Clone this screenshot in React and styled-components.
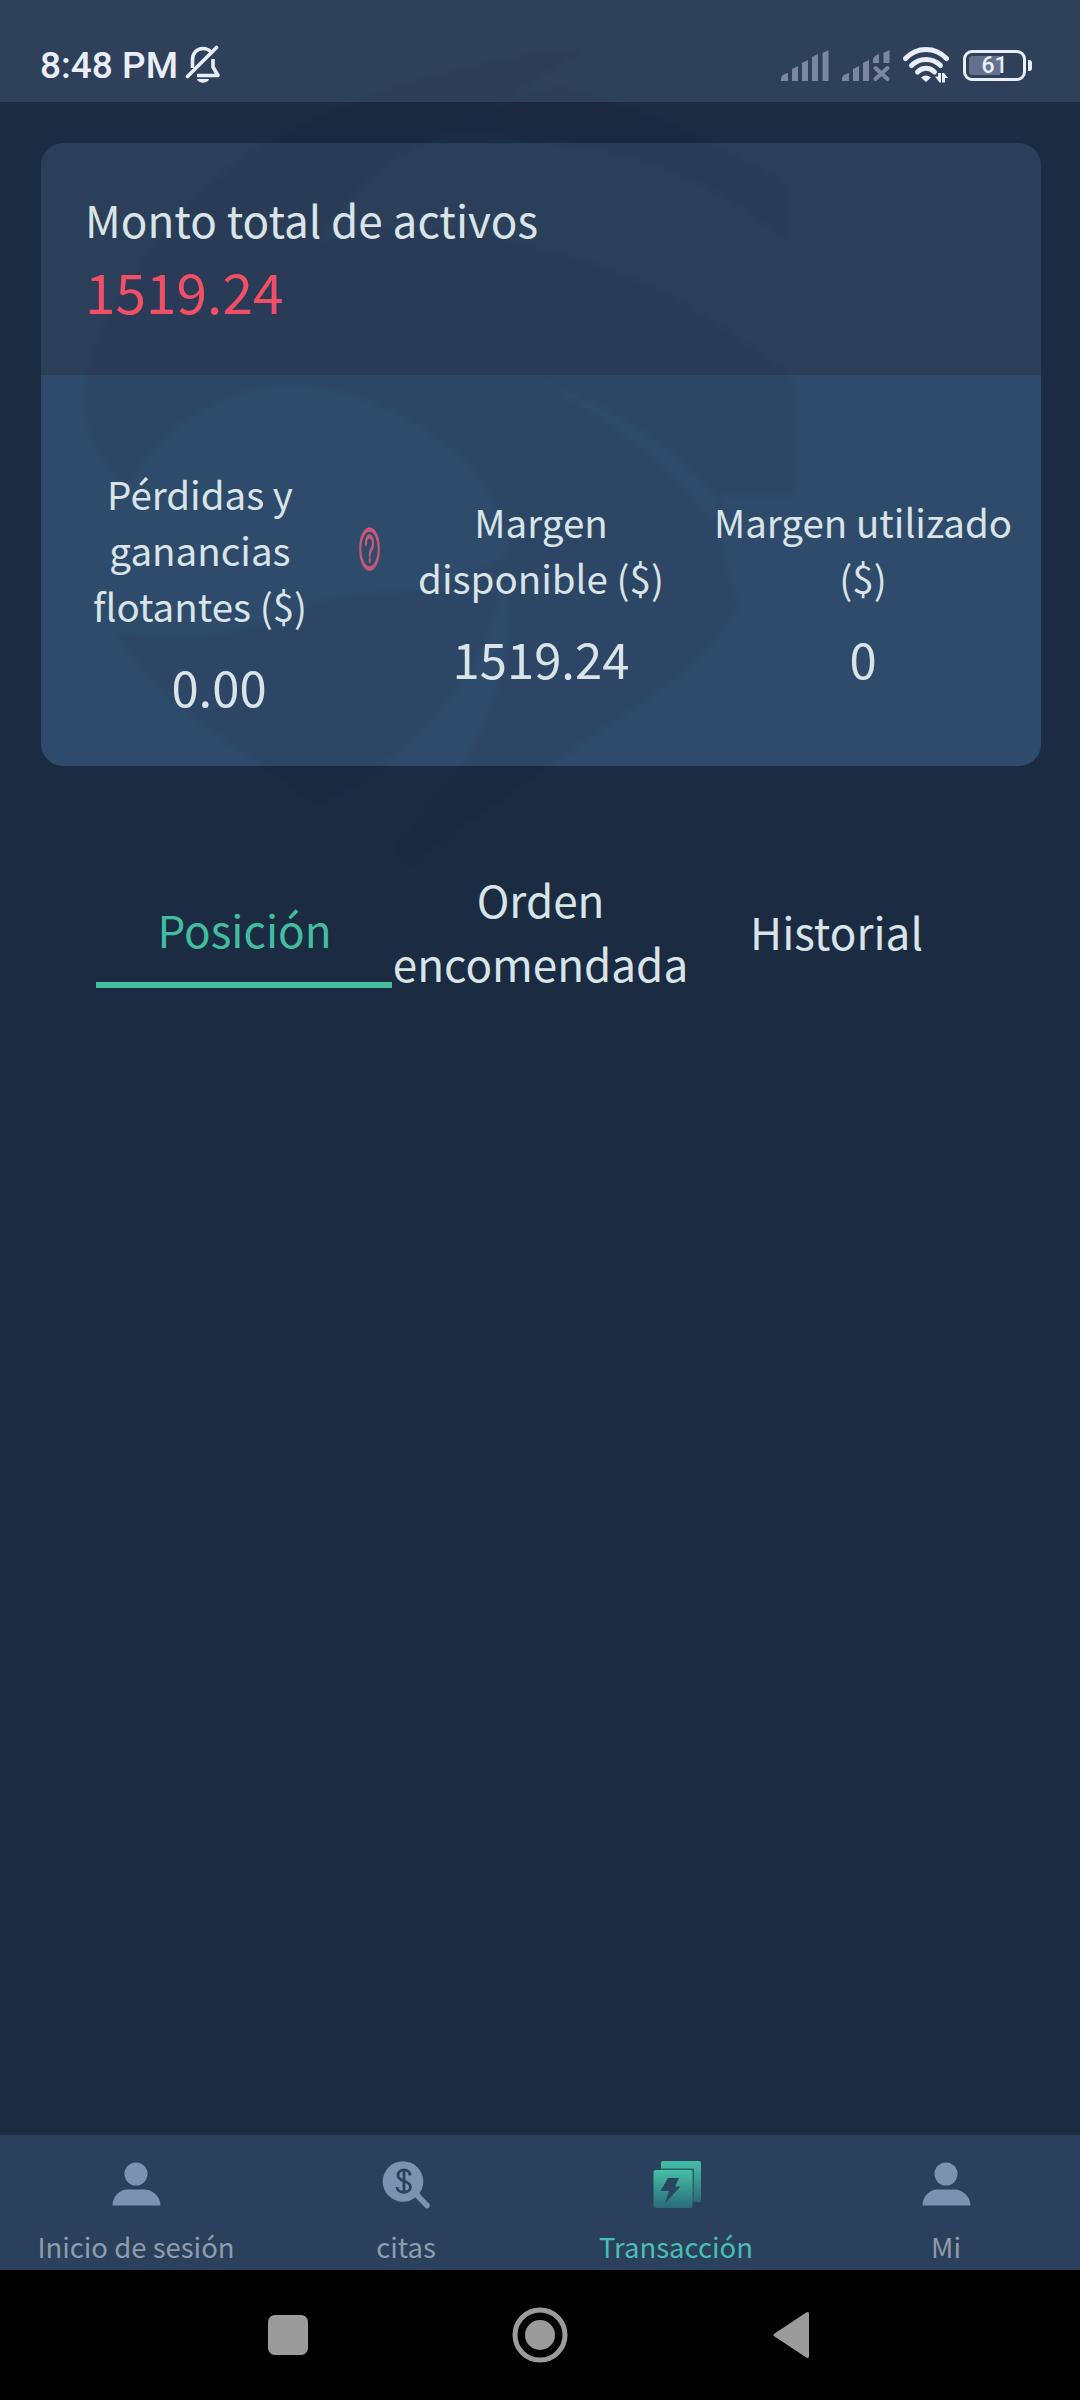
import React from "react";

// Styling
import styled, { createGlobalStyle } from "styled-components";

// Data
const stats = [
  { label: "Pérdidas y ganancias flotantes ($)", value: "0.00", help: true },
  { label: "Margen disponible ($)", value: "1519.24" },
  { label: "Margen utilizado ($)", value: "0" },
];

const tabs = ["Posición", "Orden encomendada", "Historial"];

const App = () => {
  return (
    <>
      <GlobalStyle />
      <StlScreen>
        <Watermark />
        <StatusBar />
        <StlMain>
          <StlCard>
            <StlTotal>
              <h2>Monto total de activos</h2>
              <p>1519.24</p>
            </StlTotal>
            <StlStats>
              {stats.map((stat) => (
                <StlStat key={stat.label}>
                  <StlStatLabel>
                    <span>{stat.label}</span>
                    {stat.help && <HelpIcon />}
                  </StlStatLabel>
                  <StlStatValue>{stat.value}</StlStatValue>
                </StlStat>
              ))}
            </StlStats>
          </StlCard>
          <StlTabs>
            {tabs.map((tab, i) => (
              <StlTab key={tab} $active={i === 0}>
                {tab}
              </StlTab>
            ))}
          </StlTabs>
        </StlMain>
        <StlNav>
          <StlNavItem>
            <UserIcon />
            <span>Inicio de sesión</span>
          </StlNavItem>
          <StlNavItem>
            <QuotesIcon />
            <span>citas</span>
          </StlNavItem>
          <StlNavItem $active>
            <TradeIcon />
            <span>Transacción</span>
          </StlNavItem>
          <StlNavItem>
            <UserIcon />
            <span>Mi</span>
          </StlNavItem>
        </StlNav>
        <SystemBar />
      </StlScreen>
    </>
  );
};

const StatusBar = () => (
  <StlStatusBar>
    <StlClock>8:48 PM</StlClock>
    <svg width="36" height="40" viewBox="0 0 36 40" fill="none">
      <path
        d="M7.500 23V15C7.500 8 12 3.500 18 3.500c3 0 5.500 1 7.500 3M28 14v8l5 8.500H12"
        stroke="#e9eefa"
        strokeWidth="3.600"
        strokeLinejoin="round"
      />
      <path
        d="M2.500 31.500L31.500 2.500"
        stroke="#e9eefa"
        strokeWidth="3.600"
        strokeLinecap="round"
      />
      <path d="M12 34h12c-1 5-11 5-12 0z" fill="#e9eefa" />
    </svg>
    <StlIndicators>
      <svg width="48" height="32" viewBox="0 0 48 32" fill="#7a879e">
        <path d="M0 32v-3q1-4 7-5v8zM11 32V20l6-3v15zM21 32V14l6-3v21zM31 32V8l6-3v27zM41.500 32V4l6-3v31z" />
      </svg>
      <svg width="48" height="32" viewBox="0 0 48 32" fill="#7a879e">
        <path d="M0 32v-3q1-4 7-5v8zM11 32V20l6-3v15zM21 32V14l6-3v21zM31 14v-4q1-3 6-5v9zM41.500 14V4l6-3v13z" />
        <path
          d="M33.500 19l12 11M45.500 19l-12 11"
          stroke="#7a879e"
          strokeWidth="4"
          strokeLinecap="round"
        />
      </svg>
      <svg width="46" height="36" viewBox="0 0 46 36" fill="none">
        <g stroke="#e9eefa" strokeWidth="5" strokeLinecap="round">
          <path d="M2.500 11.500C14 -.5 32 -.5 43.500 11.500" />
          <path d="M8.500 18.500c8-8 21-8 29 0" />
          <path d="M14.500 25c5-5 12-5 17 0" />
        </g>
        <path d="M18 30.500q5-4 10 0l-5 4.500z" fill="#e9eefa" />
        <path
          d="M32 29.500h3V26h3v9.500h-1.500zM39 26h2l4 5h-3v4.500h-3z"
          fill="#e9eefa"
        />
      </svg>
      <StlBattery>
        <span>61</span>
      </StlBattery>
    </StlIndicators>
  </StlStatusBar>
);

const HelpIcon = () => (
  <svg
    width="21"
    height="44"
    viewBox="0 0 44 44"
    preserveAspectRatio="none"
    fill="none"
    stroke="#c9577a"
  >
    <circle cx="22" cy="22" r="19.500" strokeWidth="4.500" />
    <path
      d="M14.500 17c0-10 15-10 15 0 0 6-7 5-7 11"
      strokeWidth="4.500"
      strokeLinecap="round"
    />
    <path d="M22.500 32.500v1.500" strokeWidth="4.500" strokeLinecap="round" />
  </svg>
);

const UserIcon = () => (
  <svg width="54" height="54" viewBox="0 0 54 54" fill="#7b92b0">
    <circle cx="27" cy="16" r="11.500" />
    <path d="M3.500 47.500c0-9 7-16 15-16h17c8 0 16 7 16 16z" />
  </svg>
);

const QuotesIcon = () => (
  <svg width="54" height="54" viewBox="0 0 54 54">
    <circle cx="24" cy="23.500" r="20.300" fill="#7b92b0" />
    <path
      d="M38 37l10 10.500"
      stroke="#7b92b0"
      strokeWidth="5.500"
      strokeLinecap="round"
    />
    <path
      d="M31 17.500c0-7.500-12-7.500-12 0 0 6.500 12.500 4.500 12.500 11.500 0 7-13.500 7-13.500 0M25 11.500v24"
      fill="none"
      stroke="#2c405c"
      strokeWidth="2.800"
    />
  </svg>
);

const TradeIcon = () => (
  <svg width="54" height="54" viewBox="0 0 54 54">
    <defs>
      <linearGradient id="trade" x1="0" y1="0" x2="0" y2="1">
        <stop offset="0" stopColor="#45bfa5" />
        <stop offset="1" stopColor="#2a6b78" />
      </linearGradient>
    </defs>
    <rect x="12" y="3" width="40" height="41" rx="2" fill="url(#trade)" />
    <path d="M12 10.500h33V44H12z" fill="#2b5f6b" />
    <rect x="4.500" y="12" width="39" height="38" rx="2" fill="url(#trade)" />
    <path d="M19 20h11l-4 8.500h5.500L16 45.500l4-12.500h-8.500z" fill="#28465f" />
  </svg>
);

// Faint swoosh logo, above the panels but below their text
const Watermark = () => (
  <StlWatermark width="1080" height="900" viewBox="0 0 1080 900">
    <path
      fillRule="evenodd"
      d="M580 50C470 60 330 100 240 160C150 230 80 340 84 410C90 450 110 475 130 485C150 440 215 386 290 386C380 386 470 450 494 502C515 550 510 555 500 558C430 605 370 585 315 602C240 640 180 640 116 633C160 710 260 760 315 803C370 795 470 690 486 640C500 600 505 580 504 556L509 633C500 690 480 740 458 770L397 847Q400 870 417 862C450 830 620 720 672 682Q715 645 740 606C725 570 722 540 716 496H795V381C720 320 630 265 534 249C460 225 380 225 315 244C370 160 420 140 463 129Q500 100 580 50zM530 378C610 405 675 445 724 505L712 522C668 462 600 410 530 378z"
    />
    <path d="M463 129Q500 100 560 88Q672 115 785 184V240C740 200 660 150 545 142z" />
  </StlWatermark>
);

const SystemBar = () => (
  <StlSystemBar>
    <svg width="40" height="40" viewBox="0 0 40 40" fill="#9b9b9b">
      <rect width="40" height="40" rx="7" />
    </svg>
    <svg width="56" height="56" viewBox="0 0 56 56">
      <circle
        cx="28"
        cy="28"
        r="25"
        fill="none"
        stroke="#9b9b9b"
        strokeWidth="5"
      />
      <circle cx="28" cy="28" r="15" fill="#9b9b9b" />
    </svg>
    <svg width="38" height="48" viewBox="0 0 38 48" fill="#9b9b9b">
      <path
        d="M35.500 2.500v43L3 24z"
        stroke="#9b9b9b"
        strokeWidth="3"
        strokeLinejoin="round"
      />
    </svg>
  </StlSystemBar>
);

const GlobalStyle = createGlobalStyle`
  * {
    margin: 0;
    padding: 0;
    box-sizing: border-box;
  }
  body {
    background: #1a2b42;
    font-family: "Noto Sans CJK SC", "Noto Sans", sans-serif;
  }
  svg {
    display: block;
    flex-shrink: 0;
  }
`;

const StlScreen = styled.div`
  width: 1080px;
  height: 2400px;
  display: flex;
  flex-direction: column;
  position: relative;
  background: #1a2b42;
  color: #d8e4e7;
`;

const StlWatermark = styled.svg`
  position: absolute;
  top: 0;
  left: 0;
  fill: #1c1c34;
  opacity: 0.09;
  filter: blur(2px);
  pointer-events: none;
`;

const StlStatusBar = styled.header`
  height: 102px;
  padding: 28px 46px 0 40px;
  display: flex;
  align-items: center;
  background: #2f405b;
`;

const StlClock = styled.span`
  font: 500 37px/44px Roboto, sans-serif;
  color: #e9eefa;
  width: 145px;
  padding-top: 2px;
  white-space: nowrap;
`;

const StlIndicators = styled.div`
  margin-left: auto;
  display: flex;
  align-items: center;
  gap: 13px;
`;

const StlBattery = styled.div`
  width: 63px;
  height: 31px;
  margin: 0 8px 0 1px;
  border: 3px solid #e9eefa;
  border-radius: 9px;
  display: flex;
  align-items: center;
  justify-content: center;
  position: relative;
  background: linear-gradient(90deg, #65718c 60%, transparent 60%) content-box;
  padding: 3px;
  color: #e9eefa;
  font: 500 23px/23px Roboto, sans-serif;

  &::after {
    content: "";
    position: absolute;
    right: -9px;
    top: 7px;
    width: 4px;
    height: 11px;
    border-radius: 0 3px 3px 0;
    background: #e9eefa;
  }
`;

const StlMain = styled.main`
  flex: 1;
  padding: 41px 39px 0 41px;
`;

const StlCard = styled.section`
  border-radius: 22px;
  overflow: hidden;
`;

const StlTotal = styled.div`
  height: 232px;
  padding: 44px 45px 0 44px;
  background: #2b3f5a;

  h2,
  p {
    position: relative;
    z-index: 1;
  }
  h2 {
    font-size: 44px;
    line-height: 64px;
    font-weight: 400;
  }
  p {
    font-size: 55px;
    line-height: 78px;
    color: #f04f66;
  }
`;

const StlStats = styled.div`
  height: 391px;
  padding: 44px 17px 0;
  display: grid;
  grid-template-columns: repeat(3, 1fr);
  align-items: center;
  background: #2f4b6b;
  text-align: center;
`;

const StlStat = styled.div`
  display: flex;
  flex-direction: column;
  gap: 18px;
  position: relative;
  z-index: 1;
`;

const StlStatLabel = styled.div`
  display: flex;
  align-items: center;
  gap: 17px;
  font-size: 38.5px;
  line-height: 56px;

  span {
    flex: 1;
  }
`;

const StlStatValue = styled.p`
  font-size: 49px;
  line-height: 70px;
`;

const StlTabs = styled.div`
  height: 116px;
  margin: 106px 57px 0 55px;
  display: grid;
  grid-template-columns: repeat(3, 296px);
  grid-template-rows: 116px;
`;

const StlTab = styled.div`
  display: flex;
  align-items: center;
  justify-content: center;
  text-align: center;
  padding: 1px 0 0 1px;
  font-size: 44px;
  line-height: 64px;
  ${({ $active }) =>
    $active &&
    `
    padding-top: 3px;
    color: #42bd9f;
    border-bottom: 6px solid #45bd9f;
  `}
`;

const StlNav = styled.nav`
  height: 135px;
  padding: 23px 0 0 1px;
  display: grid;
  grid-template-columns: repeat(4, 270px);
  background: #2b405c;
`;

const StlNavItem = styled.div`
  display: flex;
  flex-direction: column;
  align-items: center;
  gap: 14px;
  font-size: 27.5px;
  line-height: 40px;
  color: ${({ $active }) => ($active ? "#48bfb0" : "#8f9cab")};
`;

const StlSystemBar = styled.footer`
  height: 130px;
  padding: 0 270px 0 268px;
  display: flex;
  align-items: center;
  justify-content: space-between;
  background: #000;
`;

export default App;
